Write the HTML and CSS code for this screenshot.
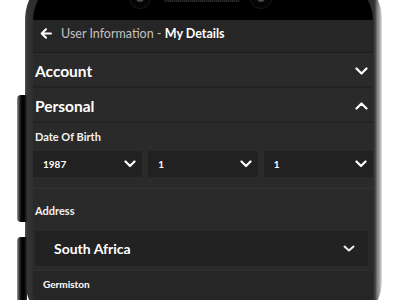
FILE: index.html
```html
<!DOCTYPE html>
<html>
<head>
<meta charset="utf-8">
<link rel="stylesheet" href="styles.css">
</head>
<body>
<div class="stage">
  <div class="btn btn-1"></div>
  <div class="btn btn-2"></div>
  <div class="phone">
    <div class="screen">
      <div class="status">
        <span class="cam cam-l"></span>
        <span class="grill"></span>
        <span class="cam cam-r"></span>
      </div>
      <div class="header">
        <svg class="back" width="12" height="11" viewBox="0 0 12 11"><path d="M11 5.5H2M6 1.2L1.7 5.5 6 9.8" fill="none" stroke="#fff" stroke-width="2" stroke-linecap="round" stroke-linejoin="round"/></svg>
        <span class="crumb">User Information - </span><span class="title">My Details</span>
      </div>
      <div class="row">
        <span class="row-title">Account</span>
        <svg class="chev" width="13" height="8" viewBox="0 0 13 8"><path d="M1.5 1.5l5 5 5-5" fill="none" stroke="#fff" stroke-width="2.2" stroke-linecap="round" stroke-linejoin="round"/></svg>
      </div>
      <div class="row">
        <span class="row-title">Personal</span>
        <svg class="chev" width="13" height="8" viewBox="0 0 13 8"><path d="M1.5 6.5l5-5 5 5" fill="none" stroke="#fff" stroke-width="2.2" stroke-linecap="round" stroke-linejoin="round"/></svg>
      </div>
      <div class="label dob">Date Of Birth</div>
      <div class="selects">
        <div class="sel"><span>1987</span><svg width="12" height="8" viewBox="0 0 12 8"><path d="M1.5 1.5l4.5 4.5 4.5-4.5" fill="none" stroke="#fff" stroke-width="2.2" stroke-linecap="round" stroke-linejoin="round"/></svg></div>
        <div class="sel"><span>1</span><svg width="12" height="8" viewBox="0 0 12 8"><path d="M1.5 1.5l4.5 4.5 4.5-4.5" fill="none" stroke="#fff" stroke-width="2.2" stroke-linecap="round" stroke-linejoin="round"/></svg></div>
        <div class="sel"><span>1</span><svg width="12" height="8" viewBox="0 0 12 8"><path d="M1.5 1.5l4.5 4.5 4.5-4.5" fill="none" stroke="#fff" stroke-width="2.2" stroke-linecap="round" stroke-linejoin="round"/></svg></div>
      </div>
      <div class="sep"></div>
      <div class="label addr">Address</div>
      <div class="country">
        <span>South Africa</span>
        <svg width="12" height="7" viewBox="0 0 12 7"><path d="M1.5 1.5l4.5 4 4.5-4" fill="none" stroke="#eee" stroke-width="2" stroke-linecap="round" stroke-linejoin="round"/></svg>
      </div>
      <div class="city">Germiston</div>
    </div>
  </div>
</div>
</body>
</html>
```

FILE: styles.css
```css
html, body {
  margin: 0;
  padding: 0;
  background: #fff;
}
.stage {
  position: relative;
  width: 400px;
  height: 300px;
  overflow: hidden;
  font-family: Lato, "Open Sans", sans-serif;
}
.phone {
  margin: -30px 0 0 25px;
  width: 357px;
  height: 360px;
  box-sizing: border-box;
  padding: 10px 9px 0 8px;
  border-radius: 50px;
  background: linear-gradient(to right, #555 0px, #363636 2px, #2e2e2e 8px, #2e2e2e 348px, #3c3c3c 350px, #7a7a7a 352px, #9a9a9a 354px, #c4c4c4 356px, #e6e6e6 357px);
}
.btn {
  position: absolute;
  left: 17px;
  width: 10px;
  border-radius: 4px 0 0 4px;
  background: linear-gradient(to right, #999 0px, #444 2px, #0a0a0a 4px, #000 7px, #2a2a2a 10px);
}
.btn-1 { top: 95px; height: 127px; }
.btn-2 { top: 237px; height: 80px; }
.screen {
  height: 100%;
  background: #2a2a2a;
  border-radius: 40px 40px 0 0;
  overflow: hidden;
}
.status {
  height: 40px;
  background: #000;
  position: relative;
}
.cam {
  position: absolute;
  top: 14px;
  width: 8px;
  height: 8px;
  border-radius: 50%;
  background: #4a4a4a;
  box-shadow: 0 0 0 6px #050505, 0 0 0 7px #151515;
}
.cam-l { left: 103px; }
.cam-r { left: 224px; }
.grill {
  position: absolute;
  top: 17px;
  left: 131px;
  width: 76px;
  height: 5px;
  border-radius: 2px;
  background: repeating-linear-gradient(to right, #2a2a2a 0 1px, #111 1px 2px);
}
.header {
  height: 33px;
  box-sizing: border-box;
  background: #262626;
  border-bottom: 1px solid #1d1d1d;
  display: flex;
  align-items: center;
  padding: 0 0 6px 7px;
  font-size: 12.5px;
  white-space: pre;
}
.back { margin-right: 9px; }
.crumb { color: #c2c2c2; }
.title { color: #fff; font-weight: 700; }
.row {
  height: 35px;
  box-sizing: border-box;
  display: flex;
  align-items: center;
  justify-content: space-between;
  padding: 3px 5px 0 2px;
  border-bottom: 2px solid #232323;
}
.row-title {
  color: #fff;
  font-weight: 700;
  font-size: 15.5px;
}
.label {
  color: #f2f2f2;
  font-size: 11px;
  font-weight: 700;
  padding-left: 2px;
  line-height: 14px;
}
.dob { padding-top: 7px; height: 21px; }
.selects {
  display: flex;
  gap: 6px;
  height: 26px;
}
.sel {
  flex: 1;
  background: #212121;
  display: flex;
  align-items: center;
  justify-content: space-between;
  padding: 0 6px 0 10px;
  color: #fff;
  font-size: 10px;
  font-weight: 700;
}
.sep {
  margin-top: 11px;
  height: 1px;
  background: #323232;
}
.addr { padding-top: 15px; height: 27px; }
.country {
  margin: 0 5px 0 2px;
  height: 35px;
  background: #222;
  display: flex;
  align-items: center;
  justify-content: space-between;
  padding: 0 13px 0 19px;
  color: #fff;
  font-size: 14px;
  font-weight: 700;
}
.city {
  margin-top: 4px;
  border-top: 1px solid #303030;
  background: #262626;
  height: 40px;
  padding: 7px 0 0 10px;
  color: #fff;
  font-size: 10px;
  font-weight: 700;
}
```
